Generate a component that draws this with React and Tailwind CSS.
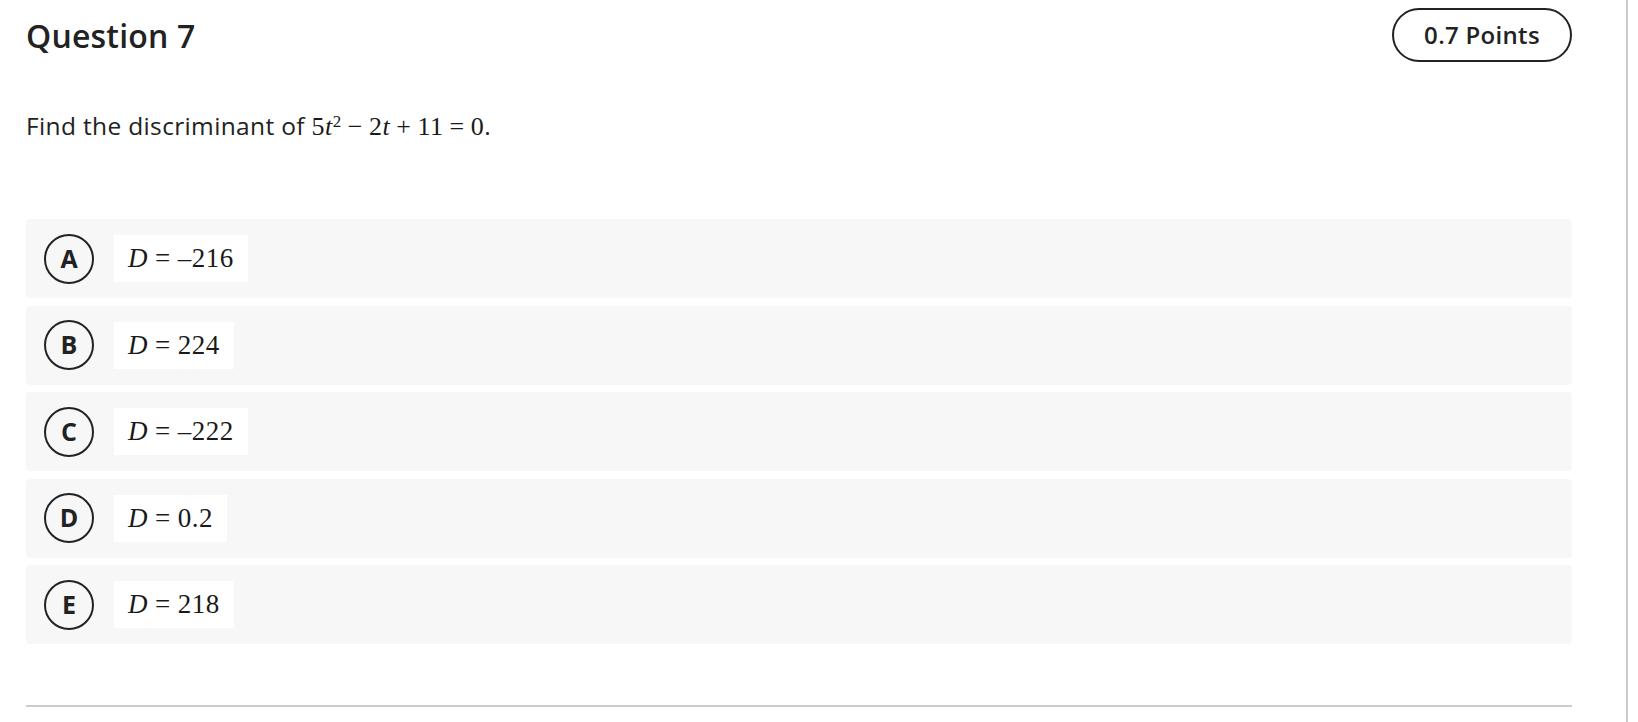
const options = [
  { letter: "A", value: "\u2013216" },
  { letter: "B", value: "224" },
  { letter: "C", value: "\u2013222" },
  { letter: "D", value: "0.2" },
  { letter: "E", value: "218" },
];

const sans = { fontFamily: '"Open Sans", "Noto Sans", sans-serif' };

const Option = ({ letter, value }) => {
  return (
    <div className="h-[79px] flex items-center pl-[18px] bg-[#f7f7f7] rounded-[4px]">
      <div className="w-[50px] h-[50px] rounded-full border-2 border-[#222] flex items-center justify-center text-[25px] font-bold text-[#222]">
        {letter}
      </div>
      <div className="ml-[20px] h-[47px] bg-white flex items-center px-[14px] text-[27px] text-[#1a1a1a] font-['Liberation_Serif',serif] tracking-[0.5px]">
        <span className="italic">D</span>
        <span className="mx-[7px]">=</span>
        <span>{value}</span>
      </div>
    </div>
  );
};

const App = () => {
  return (
    <div className="flex h-[722px] w-[1638px] bg-white text-[#222]" style={sans}>
      <div className="w-[1626px] pl-[26px] pr-[54px] pt-[8px]">
        <div className="flex items-center justify-between">
          <h1 className="text-[32px] font-semibold leading-[40px] pt-[2px] tracking-[0.2px]">Question 7</h1>
          <div className="w-[180px] h-[54px] rounded-full border-2 border-[#222] flex items-center justify-center text-[24px] font-semibold tracking-[0.3px]">
            0.7 Points
          </div>
        </div>

        <p className="mt-[49px] h-[30px] text-[24.5px] leading-[30px] tracking-[0.35px]">
          Find the discriminant of{" "}
          <span className="text-[26px] text-[#1a1a1a] font-['Liberation_Serif',serif] tracking-[0.5px]">
            5<span className="italic">t</span>
            <sup className="text-[17px]">2</sup>
            <span className="mx-[6px]">{"\u2212"}</span>2<span className="italic">t</span>
            <span className="mx-[6px]">+</span>11
            <span className="mx-[6px]">=</span>0
          </span>
          .
        </p>

        <div className="mt-[78px] flex flex-col gap-[7.5px]">
          {options.map((o) => (
            <Option key={o.letter} letter={o.letter} value={o.value} />
          ))}
        </div>

        <div className="mt-[61px] h-[2px] bg-[#cccccc]"></div>
      </div>
      <div className="w-[2px] h-full bg-[#cccccc]"></div>
    </div>
  );
};

export default App;
